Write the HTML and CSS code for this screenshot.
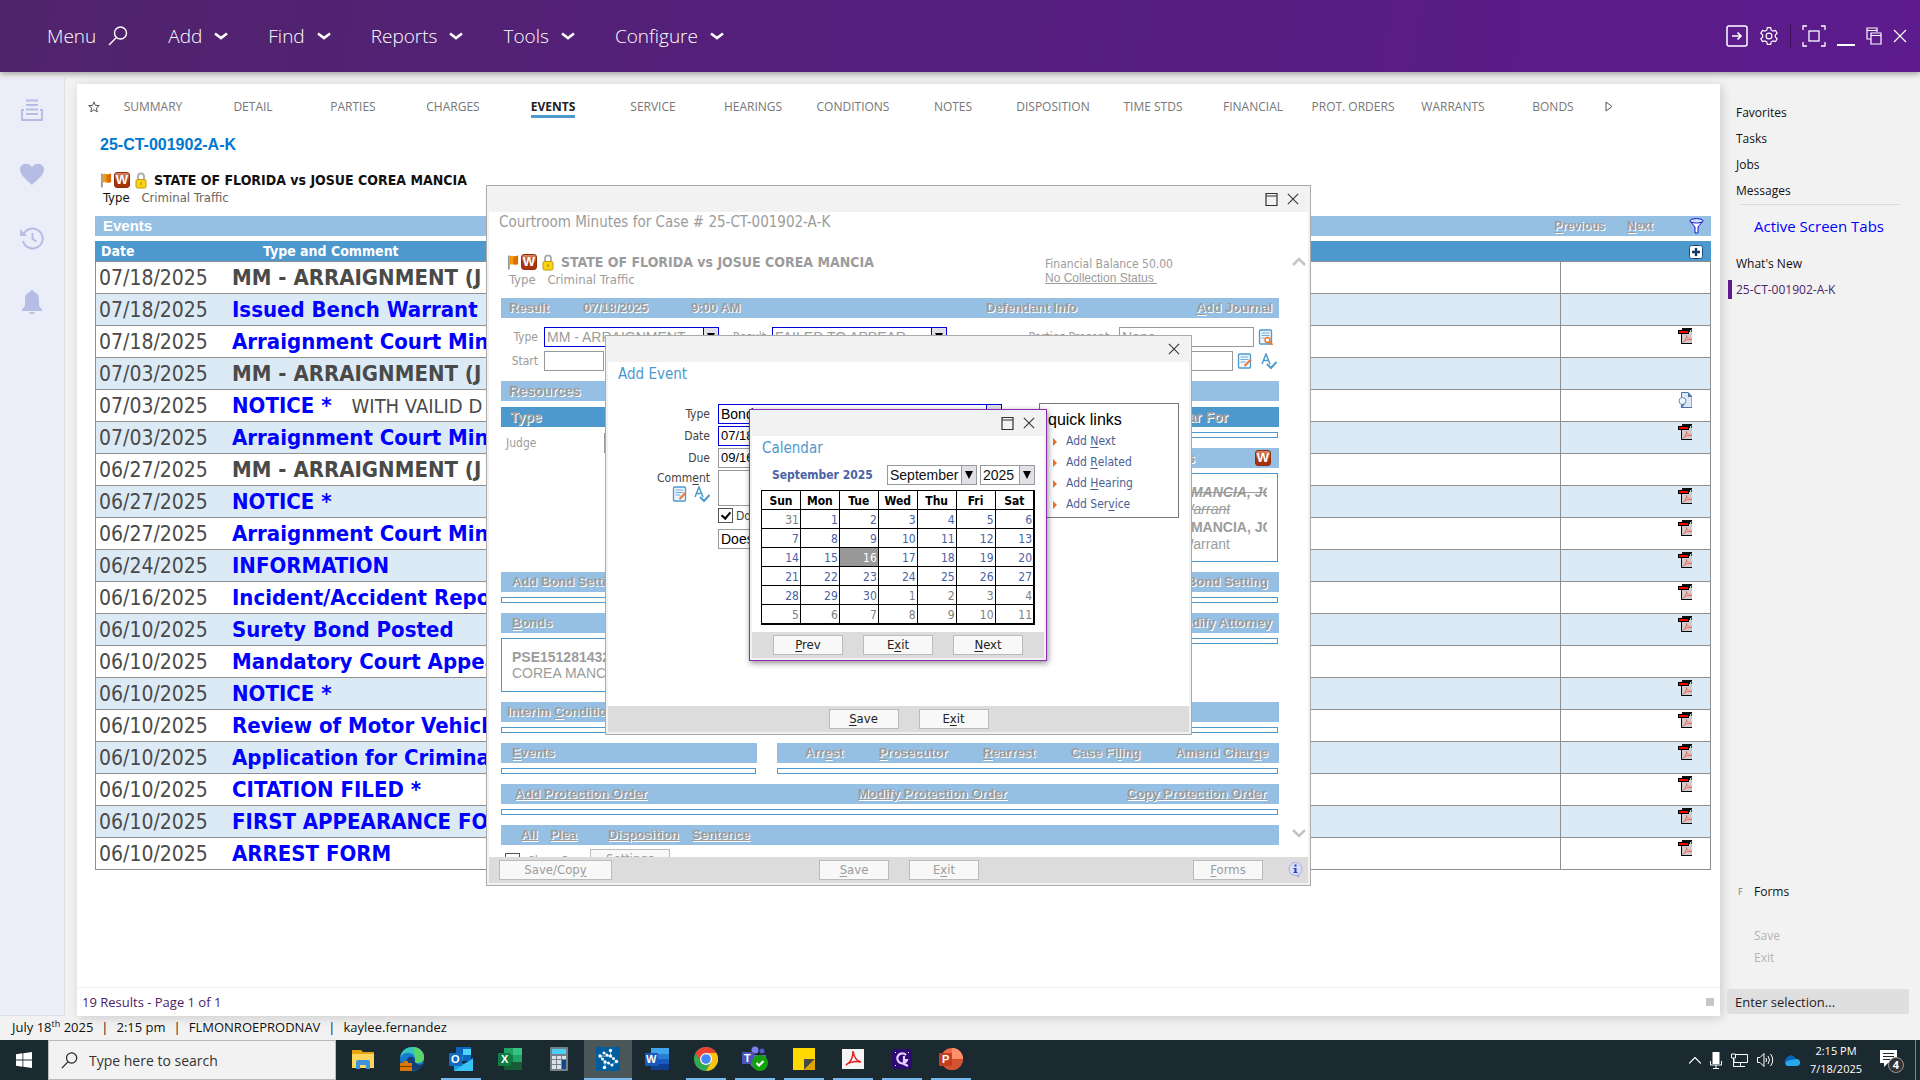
FILE: index.html
```html
<!DOCTYPE html>
<html lang="en">
  <head>
    <meta charset="UTF-8" />
    <meta name="viewport" content="width=device-width, initial-scale=1.0" />
    <title>25-CT-001902-A-K - Events</title>
    <link rel="stylesheet" href="styles.css">
  </head>
  <body>
    <!-- Shared icons -->
    <svg class="defs" width="0" height="0" aria-hidden="true">
      <symbol id="i-chevron" viewBox="0 0 14 8"><path d="M1 1.5l6 4.5 6-4.5" fill="none" stroke="currentColor" stroke-width="2.6" /></symbol>
      <symbol id="i-search" viewBox="0 0 20 20"><circle cx="12.5" cy="7" r="6" fill="none" stroke="currentColor" stroke-width="1.4" /><path d="M8.4 11.4L1 19" stroke="currentColor" stroke-width="1.4" /></symbol>
      <symbol id="i-close" viewBox="0 0 14 14"><path d="M1 1l12 12M13 1L1 13" stroke="currentColor" stroke-width="1.2" /></symbol>
      <symbol id="i-max" viewBox="0 0 13 13"><path d="M1 .5h11v12H1zM1 3h11" fill="none" stroke="currentColor" stroke-width="1.2" /></symbol>
      <symbol id="i-pdf" viewBox="0 0 14 16">
        <path d="M3 1h11v15H3z" fill="#ccc" /><path d="M4 0h10v2H4z" fill="#111" /><path d="M3.5 5v10.5H14" fill="none" stroke="#000" />
        <path d="M0 2h11v4H0z" fill="#000" /><path d="M1 3h9v2H1z" fill="#f00" /><path d="M11.5 0v4M14 1h-2" stroke="#000" fill="none" /><path d="M13 1h1v3h-1z" fill="#f00" />
        <path d="M5 14c2-1 3.500-3.500 3.500-6.500C9 10 11 12 14 12M5 14c2-2 5-3 9-3" fill="none" stroke="#fa6a5c" />
      </symbol>
      <symbol id="i-doc" viewBox="0 0 14 16">
        <path d="M3.500.5H10l4 4v11H3.500z" fill="#dfe6f5" stroke="#4a72ad" /><path d="M10 0l4 5h-4z" fill="#4a72ad" />
        <circle cx="4.500" cy="9" r="3.500" fill="#eef6ff" stroke="#6c8cc0" /><path d="M6 12l-3 3.500" stroke="#4a72ad" stroke-width="1.500" />
      </symbol>
      <symbol id="i-flag" viewBox="0 0 13 17">
        <path d="M1 1h2v15H1z" fill="#999" /><path d="M3 2c2-2 4 1 9-1v9c-4 2-6-1-9 1z" fill="#f39a0b" /><path d="M7 2c2 0 3 0 5-1v9c-2 1-4 .6-5 .3z" fill="#d86f06" />
      </symbol>
      <symbol id="i-lock" viewBox="0 0 12 17">
        <path d="M3 8V4.500a3 3.200 0 0 1 6 0V8" fill="none" stroke="#aaa" stroke-width="1.800" /><rect x="1" y="7.500" width="10" height="8.500" rx="1.500" fill="#f7d515" stroke="#c79a04" /><path d="M6 10v3" stroke="#a37b00" />
      </symbol>
      <symbol id="i-note" viewBox="0 0 15 16">
        <rect x="1" y="1" width="12" height="14" rx="1" fill="#eef6fc" stroke="#4d99ce" stroke-width="1.300" /><path d="M3 4h8M3 6.500h8M3 9h5" stroke="#6cace0" /><path d="M13.500 6.500L7 13" stroke="#ed7635" stroke-width="2" />
      </symbol>
      <symbol id="i-find" viewBox="0 0 15 16">
        <rect x="1" y="1" width="12" height="14" rx="1" fill="#eef6fc" stroke="#4d99ce" stroke-width="1.300" /><path d="M3 4h8M3 6.500h8M3 9h3" stroke="#6cace0" /><circle cx="9" cy="11" r="2.500" fill="#fff" stroke="#ed7635" stroke-width="1.500" /><path d="M11 13l3 3" stroke="#ed7635" stroke-width="2" />
      </symbol>
      <symbol id="i-spell" viewBox="0 0 16 16"><path d="M1 11L5 1l4 10M2.500 7.500h5" fill="none" stroke="#4d99ce" stroke-width="1.500" /><path d="M6 11l4 4 5.500-6" fill="none" stroke="#4d99ce" stroke-width="2" /></symbol>
    </svg>

    <header class="topbar">
      <nav class="menu">
        <button type="button">Menu <svg width="20" height="20"><use href="#i-search" /></svg></button>
        <button type="button">Add <svg width="14" height="8"><use href="#i-chevron" /></svg></button>
        <button type="button">Find <svg width="14" height="8"><use href="#i-chevron" /></svg></button>
        <button type="button">Reports <svg width="14" height="8"><use href="#i-chevron" /></svg></button>
        <button type="button">Tools <svg width="14" height="8"><use href="#i-chevron" /></svg></button>
        <button type="button">Configure <svg width="14" height="8"><use href="#i-chevron" /></svg></button>
      </nav>
      <div class="window-tools">
        <button type="button" aria-label="Sign out"><svg width="22" height="22" viewBox="0 0 22 22" fill="none" stroke="#fff"><rect x="1" y="1" width="20" height="20" rx="2" stroke-width="1.500" /><path d="M6 11h9M11.500 7.500L15 11l-3.500 3.500" stroke-width="1.700" /></svg></button>
        <button type="button" aria-label="Settings"><svg width="20" height="20" viewBox="0 0 24 24" fill="none" stroke="#fff" stroke-width="1.400"><circle cx="12" cy="12" r="3.500" /><path d="M10 2h4l.7 3 2.100 1.200 3-.9 2 3.400-2.200 2.200v2.200l2.200 2.200-2 3.400-3-.9-2.100 1.200-.7 3h-4l-.7-3-2.100-1.200-3 .9-2-3.400 2.200-2.200v-2.200L2.200 8.700l2-3.400 3 .9L9.300 5z" /></svg></button>
        <span class="divider"></span>
        <button type="button" aria-label="Full screen"><svg width="24" height="22" viewBox="0 0 24 22" fill="none" stroke="#fff" stroke-width="1.300"><path d="M5 1H1v4M19 1h4v4M5 21H1v-4M19 21h4v-4" /><rect x="7" y="6" width="10" height="10" /></svg></button>
        <button type="button" aria-label="Minimize"><svg width="18" height="20"><path d="M0 18h18v2H0z" fill="#fff" /></svg></button>
        <button type="button" aria-label="Restore"><svg width="16" height="18" viewBox="0 0 16 18" fill="none" stroke="#fff" stroke-width="1.200"><path d="M5 12H1V1h10v4M1 3.500h10" /><path d="M5 6h10v11H5zM5 8.500h10" /></svg></button>
        <button type="button" aria-label="Close"><svg width="14" height="14"><use href="#i-close" /></svg></button>
      </div>
    </header>

    <div class="workspace">
      <aside class="rail">
        <a href="#" aria-label="Print queue"><svg width="24" height="24" viewBox="0 0 24 24" fill="none" stroke="#b5bde4" stroke-width="2"><path d="M6 2.500h12M6 7h12M6 11.500h12M6 16h12" /><path d="M4 12H2v10h20V12h-2" /></svg></a>
        <a href="#" aria-label="Favorites"><svg width="24" height="24" viewBox="0 0 24 24"><path d="M12 23C7 18 0 13 0 7.500 0 1 8.500-.5 12 5c3.500-5.500 12-4 12 2.500C24 13 17 18 12 23z" fill="#b5bde4" /></svg></a>
        <a href="#" aria-label="History"><svg width="24" height="24" viewBox="0 0 24 24" fill="none" stroke="#b5bde4" stroke-width="2"><path d="M3.500 8.500A10 10 0 1 1 3 15" /><path d="M12.500 7v6l4 2.500" /><path d="M0 3v7h7z" fill="#b5bde4" stroke="none" /></svg></a>
        <a href="#" aria-label="Alerts"><svg width="24" height="24" viewBox="0 0 24 24"><path d="M12 0a2 2 0 0 1 2 2c3.500 1 5 4 5 7.500V16l3 3.500V21H2v-1.500L5 16V9.500C5 6 6.500 3 10 2a2 2 0 0 1 2-2zM9.500 22h5a2.500 2.500 0 0 1-5 0z" fill="#b5bde4" /></svg></a>
      </aside>

      <main class="panel">
        <nav class="tabs">
          <svg class="star" width="12" height="12" viewBox="0 0 12 12"><path d="M6 .8l1.400 3.600 3.900.2-3 2.500 1 3.800L6 8.800l-3.300 2.100 1-3.800-3-2.500 3.900-.2z" fill="none" stroke="#555" /></svg>
          <a href="#">SUMMARY</a>
          <a href="#">DETAIL</a>
          <a href="#">PARTIES</a>
          <a href="#">CHARGES</a>
          <a href="#" class="active"><span>EVENTS</span></a>
          <a href="#">SERVICE</a>
          <a href="#">HEARINGS</a>
          <a href="#">CONDITIONS</a>
          <a href="#">NOTES</a>
          <a href="#">DISPOSITION</a>
          <a href="#">TIME STDS</a>
          <a href="#">FINANCIAL</a>
          <a href="#">PROT. ORDERS</a>
          <a href="#">WARRANTS</a>
          <a href="#">BONDS</a>
          <svg class="more" width="8" height="11" viewBox="0 0 8 11"><path d="M1 1l6 4.500L1 10z" fill="none" stroke="#555" /></svg>
        </nav>

        <div class="case">
          <h1>25-CT-001902-A-K</h1>
          <div class="case-title">
            <svg width="12" height="17"><use href="#i-flag" /></svg><span class="w-badge">W</span><svg width="12" height="17"><use href="#i-lock" /></svg>
            <strong>STATE OF FLORIDA vs JOSUE COREA MANCIA</strong>
          </div>
          <p class="case-type"><span>Type</span> Criminal Traffic</p>
        </div>

        <div class="events">
          <div class="events-bar">
            <h2>Events</h2>
            <a href="#"><u>P</u>revious</a>
            <a href="#"><u>N</u>ext</a>
            <svg width="15" height="16" viewBox="0 0 15 16"><path d="M1 3l5 6v6h3V9l5-6" fill="#fff" stroke="#1414dc" /><ellipse cx="7.500" cy="2.800" rx="6.500" ry="2.200" fill="#cfe3f4" stroke="#1414dc" /></svg>
          </div>
          <table class="events-table">
            <thead>
              <tr>
                <th class="col-date">Date</th>
                <th class="col-type">Type and Comment</th>
                <th class="col-doc"><svg width="14" height="14" viewBox="0 0 14 14"><rect x=".5" y=".5" width="13" height="13" rx="2" fill="#fff" stroke="#1c4f7c" /><path d="M7 3v8M3 7h8" stroke="#123c66" stroke-width="2.400" /></svg></th>
              </tr>
            </thead>
            <tbody>
              <tr><td>07/18/2025</td><td><b>MM - ARRAIGNMENT (J</b></td><td></td></tr>
              <tr><td>07/18/2025</td><td><a href="#">Issued Bench Warrant</a></td><td></td></tr>
              <tr><td>07/18/2025</td><td><a href="#">Arraignment Court Min</a></td><td><svg><use href="#i-pdf" /></svg></td></tr>
              <tr><td>07/03/2025</td><td><b>MM - ARRAIGNMENT (J</b></td><td></td></tr>
              <tr><td>07/03/2025</td><td><a href="#">NOTICE *</a> <span>WITH VAILID D</span></td><td><svg><use href="#i-doc" /></svg></td></tr>
              <tr><td>07/03/2025</td><td><a href="#">Arraignment Court Min</a></td><td><svg><use href="#i-pdf" /></svg></td></tr>
              <tr><td>06/27/2025</td><td><b>MM - ARRAIGNMENT (J</b></td><td></td></tr>
              <tr><td>06/27/2025</td><td><a href="#">NOTICE *</a></td><td><svg><use href="#i-pdf" /></svg></td></tr>
              <tr><td>06/27/2025</td><td><a href="#">Arraignment Court Min</a></td><td><svg><use href="#i-pdf" /></svg></td></tr>
              <tr><td>06/24/2025</td><td><a href="#">INFORMATION</a></td><td><svg><use href="#i-pdf" /></svg></td></tr>
              <tr><td>06/16/2025</td><td><a href="#">Incident/Accident Repo</a></td><td><svg><use href="#i-pdf" /></svg></td></tr>
              <tr><td>06/10/2025</td><td><a href="#">Surety Bond Posted</a></td><td><svg><use href="#i-pdf" /></svg></td></tr>
              <tr><td>06/10/2025</td><td><a href="#">Mandatory Court Appea</a></td><td></td></tr>
              <tr><td>06/10/2025</td><td><a href="#">NOTICE *</a></td><td><svg><use href="#i-pdf" /></svg></td></tr>
              <tr><td>06/10/2025</td><td><a href="#">Review of Motor Vehicl</a></td><td><svg><use href="#i-pdf" /></svg></td></tr>
              <tr><td>06/10/2025</td><td><a href="#">Application for Crimina</a></td><td><svg><use href="#i-pdf" /></svg></td></tr>
              <tr><td>06/10/2025</td><td><a href="#">CITATION FILED *</a></td><td><svg><use href="#i-pdf" /></svg></td></tr>
              <tr><td>06/10/2025</td><td><a href="#">FIRST APPEARANCE FO</a></td><td><svg><use href="#i-pdf" /></svg></td></tr>
              <tr><td>06/10/2025</td><td><a href="#">ARREST FORM</a></td><td><svg><use href="#i-pdf" /></svg></td></tr>
            </tbody>
          </table>
        </div>

        <footer class="panel-footer">19 Results - Page 1 of 1 <i></i></footer>
      </main>

      <aside class="sidebar">
        <nav class="side-links">
          <a href="#">Favorites</a>
          <a href="#">Tasks</a>
          <a href="#">Jobs</a>
          <a href="#">Messages</a>
        </nav>
        <a href="#" class="screen-tabs">Active Screen Tabs</a>
        <nav class="side-links">
          <a href="#">What's New</a>
          <a href="#" class="current">25-CT-001902-A-K</a>
        </nav>
        <div class="side-actions">
          <a href="#" class="forms"><small>F</small>Forms</a>
          <a href="#" class="off">Save</a>
          <a href="#" class="off">Exit</a>
        </div>
        <input type="text" class="selection" placeholder="Enter selection..." aria-label="Enter selection" />
      </aside>
    </div>

    <div class="status">
      <span>July 18<sup>th</sup> 2025</span><span>|</span><span>2:15 pm</span><span>|</span><span>FLMONROEPRODNAV</span><span>|</span><span>kaylee.fernandez</span>
    </div>

    <!-- Courtroom minutes window -->
    <section class="window minutes">
      <div class="titlebar"><svg width="13" height="13"><use href="#i-max" /></svg><svg width="12" height="12"><use href="#i-close" /></svg></div>
      <div class="window-body">
        <div class="minutes-content">
          <h2>Courtroom Minutes for Case # 25-CT-001902-A-K</h2>
          <div class="minutes-head">
            <div>
              <div class="case-title">
                <svg width="12" height="17"><use href="#i-flag" /></svg><span class="w-badge">W</span><svg width="12" height="17"><use href="#i-lock" /></svg>
                <strong>STATE OF FLORIDA vs JOSUE COREA MANCIA</strong>
              </div>
              <p class="case-type"><span>Type</span> Criminal Traffic</p>
            </div>
            <p class="balance">Financial Balance 50.00<br /><a href="#">No Collection Status&nbsp;</a></p>
          </div>
          <div class="bar bar-result"><span>Result</span><span>07/18/2025</span><span>9:00 AM</span><span>Defendant Info</span><a href="#"><u>A</u>dd Journal</a></div>
          <div class="minutes-form">
            <label for="m-type">Type</label>
            <span class="select required"><select id="m-type"><option>MM - ARRAIGNMENT</option></select></span>
            <label for="m-result">Result</label>
            <span class="select required"><select id="m-result"><option>FAILED TO APPEAR</option></select></span>
            <label for="m-party" class="push">Parties Present</label>
            <input type="text" id="m-party" class="w-party" value="None" />
            <svg width="16" height="16"><use href="#i-find" /></svg>
          </div>
          <div class="minutes-form">
            <label for="m-start">Start</label>
            <input type="text" id="m-start" class="w-start" />
            <input type="text" class="w-comment" aria-label="Comment" />
            <svg width="16" height="16"><use href="#i-note" /></svg>
            <svg width="16" height="16"><use href="#i-spell" /></svg>
          </div>
          <div class="bar bar-plain">Resources</div>
          <div class="split resources">
            <div>
              <div class="bar dark">Type</div>
              <div class="judge"><label for="m-judge">Judge</label><input type="text" id="m-judge" /></div>
            </div>
            <div>
              <div class="bar dark bar-for">Appear For</div>
              <div class="line-box"></div>
              <div class="bar bar-end">Warrants <span class="w-badge">W</span></div>
              <div class="warrants">
                <p class="old"><b>COREA MANCIA, JOSUE</b><span>Bench Warrant</span></p>
                <p><b>COREA MANCIA, JOSUE</b><span>Bench Warrant</span></p>
              </div>
            </div>
          </div>
          <div class="bar bar-bond"><a href="#">Add Bond Setting</a><a href="#">Modify Bond Setting</a></div>
          <div class="line-box"></div>
          <div class="split bonds">
            <div>
              <div class="bar"><a href="#"><u>B</u>onds</a></div>
              <div class="bond-box"><b>PSE1512814321</b><span>COREA MANCIA</span></div>
            </div>
            <div>
              <div class="bar bar-attorney"><a href="#">Modify Attorney</a></div>
              <div class="line-box"></div>
            </div>
          </div>
          <div class="bar bar-interim"><a href="#">Interim <u>C</u>onditions</a></div>
          <div class="line-box"></div>
          <div class="split">
            <div>
              <div class="bar"><a href="#"><u>E</u>vents</a></div>
              <div class="line-box"></div>
            </div>
            <div>
              <div class="bar bar-charge"><a href="#">Arr<u>e</u>st</a><a href="#"><u>P</u>rosecutor</a><a href="#"><u>R</u>earrest</a><a href="#">Case Fi<u>l</u>ing</a><a href="#">Amend Char<u>g</u>e</a></div>
              <div class="line-box"></div>
            </div>
          </div>
          <div class="bar bar-order"><a href="#">Add Protection Order</a><a href="#">Modify Protection Order</a><a href="#">Copy Protection Order</a></div>
          <div class="line-box"></div>
          <div class="bar bar-all"><a href="#">All</a><a href="#">Plea</a><a href="#">Disposition</a><a href="#">Sentence</a></div>
          <div class="cutoff">
            <input type="checkbox" id="show-co" /><label for="show-co">Show Co</label>
            <button type="button" class="btn">Settings</button>
          </div>
        </div>
        <div class="scroller"><svg width="14" height="10"><path d="M1 9l6-6 6 6" /></svg><svg width="14" height="10"><path d="M1 1l6 6 6-6" /></svg></div>
      </div>
      <div class="window-footer">
        <button type="button" class="btn wide">Save/Cop<u>y</u></button>
        <div class="btn-pair">
          <button type="button" class="btn"><u>S</u>ave</button>
          <button type="button" class="btn">E<u>x</u>it</button>
        </div>
        <button type="button" class="btn"><u>F</u>orms</button>
        <svg width="15" height="16" viewBox="0 0 15 16"><path d="M5 11l6 5v-5z" fill="#a9a6cc" /><circle cx="7.500" cy="7" r="6.500" fill="#dcdcf6" stroke="#b0aedb" /><path d="M6.500 2.500h2v2h-2zM5.500 6h3v4h1v1h-4v-1h1V7h-1z" fill="#1746c9" /></svg>
      </div>
    </section>

    <!-- Add event window -->
    <section class="window add-event">
      <div class="titlebar"><svg width="12" height="12"><use href="#i-close" /></svg></div>
      <div class="window-body">
        <h2>Add Event</h2>
        <div class="event-area">
          <form class="event-form">
            <label for="e-type">Type</label>
            <span class="select required wide-select"><select id="e-type"><option>Bond</option></select></span>
            <label for="e-date">Date</label>
            <input type="text" id="e-date" class="date required" value="07/18" />
            <label for="e-due">Due</label>
            <input type="text" id="e-due" class="date" value="09/16" />
            <div class="comment-label">
              <label for="e-comment">Comm<u>e</u>nt</label>
              <span><svg width="16" height="16"><use href="#i-note" /></svg><svg width="16" height="16"><use href="#i-spell" /></svg></span>
            </div>
            <textarea id="e-comment"></textarea>
            <div class="docket"><input type="checkbox" id="e-docket" checked /><label for="e-docket">Do</label></div>
            <input type="text" class="does" value="Does" aria-label="Docket text" />
          </form>
          <div class="quick-links">
            <h3>quick links</h3>
            <a href="#">Add <u>N</u>ext</a>
            <a href="#">Add <u>R</u>elated</a>
            <a href="#">Add <u>H</u>earing</a>
            <a href="#">Add Ser<u>v</u>ice</a>
          </div>
        </div>
      </div>
      <div class="window-footer centered">
        <button type="button" class="btn"><u>S</u>ave</button>
        <button type="button" class="btn">E<u>x</u>it</button>
      </div>
    </section>

    <!-- Calendar window -->
    <section class="window calendar">
      <div class="titlebar"><svg width="13" height="13"><use href="#i-max" /></svg><svg width="12" height="12"><use href="#i-close" /></svg></div>
      <div class="window-body">
        <h2>Calendar</h2>
        <div class="month-row">
          <strong>September 2025</strong>
          <span class="select month"><select aria-label="Month"><option>September</option></select></span>
          <span class="select year"><select aria-label="Year"><option>2025</option></select></span>
        </div>
        <table class="days">
          <thead>
            <tr><th>Sun</th><th>Mon</th><th>Tue</th><th>Wed</th><th>Thu</th><th>Fri</th><th>Sat</th></tr>
          </thead>
          <tbody>
            <tr><td class="out">31</td><td>1</td><td>2</td><td>3</td><td>4</td><td>5</td><td>6</td></tr>
            <tr><td>7</td><td>8</td><td>9</td><td>10</td><td>11</td><td>12</td><td>13</td></tr>
            <tr><td>14</td><td>15</td><td class="today">16</td><td>17</td><td>18</td><td>19</td><td>20</td></tr>
            <tr><td>21</td><td>22</td><td>23</td><td>24</td><td>25</td><td>26</td><td>27</td></tr>
            <tr><td>28</td><td>29</td><td>30</td><td class="out">1</td><td class="out">2</td><td class="out">3</td><td class="out">4</td></tr>
            <tr><td class="out">5</td><td class="out">6</td><td class="out">7</td><td class="out">8</td><td class="out">9</td><td class="out">10</td><td class="out">11</td></tr>
          </tbody>
        </table>
      </div>
      <div class="window-footer centered">
        <button type="button" class="btn"><u>P</u>rev</button>
        <button type="button" class="btn">E<u>x</u>it</button>
        <button type="button" class="btn"><u>N</u>ext</button>
      </div>
    </section>

    <!-- Desktop taskbar -->
    <footer class="taskbar">
      <button type="button" class="start" aria-label="Start"><svg width="16" height="16" viewBox="0 0 16 16" fill="#fff"><path d="M0 2.200l6.500-.9v6.300H0zM7.300 1.200L16 0v7.600H7.300zM0 8.400h6.500v6.300L0 13.800zM7.300 8.400H16V16l-8.700-1.200z" /></svg></button>
      <label class="search"><svg width="17" height="17"><use href="#i-search" /></svg><input type="text" placeholder="Type here to search" /></label>
      <div class="apps">
        <a href="#" aria-label="File Explorer"><svg width="24" height="24" viewBox="0 0 24 24"><path d="M1 3h9l2 2h11v16H1z" fill="#e5a50e" /><path d="M1 7h22v14H1z" fill="#ffd65c" /><path d="M5 22v-7q0-2 2-2h10q2 0 2 2v7h-4v-4H9v4z" fill="#3b93dd" /></svg></a>
        <a href="#" aria-label="Edge"><svg width="24" height="24" viewBox="0 0 24 24"><circle cx="12" cy="12" r="12" fill="#1679cb" /><path d="M0 11C1 4 6 0 12 0c8 0 12 5 12 10 0 4-3 6-6 6-3 0-4-2-3-4 0-4-3-6-7-6-4 0-7 2-8 5z" fill="#36c5c0" /><path d="M14 0c7 1 10 6 10 10 0 4-3 6-6 6-3 0-4-2-3-4z" fill="#5bd46a" /><path d="M15 12c-1 3 1 7 8 5-3 6-10 8-15 5-4-3-3-9 1-12 3-1 6 1 6 2z" fill="#153e73" /><path d="M4 16V14h4v2h4v8H0v-8z" fill="#d97806" /><path d="M0 19h12v1H0z" fill="#7b3c00" /></svg></a>
        <a href="#" class="open" aria-label="Outlook"><svg width="24" height="24" viewBox="0 0 24 24"><path d="M7 0h15v14H7z" fill="#0a66bd" /><path d="M14 2h8v6h-8z" fill="#50d2fb" /><path d="M7 8h7v6H7z" fill="#1490df" /><path d="M5 11l9.500 6L24 11v13H5z" fill="#1aa2e8" /><path d="M5 24l19-12v12z" fill="#3cc3f5" /><rect y="6" width="13" height="13" rx="1" fill="#0f6cbf" /><text x="2" y="16" font-size="11">O</text></svg></a>
        <a href="#" aria-label="Excel"><svg width="24" height="24" viewBox="0 0 24 24"><path d="M6 1h18v22H6z" fill="#21a366" /><path d="M15 1h9v7h-9z" fill="#33c481" /><path d="M6 8h9v7H6z" fill="#107c41" /><path d="M6 15h18v8H6z" fill="#185c37" /><rect y="6" width="13" height="13" rx="1" fill="#107c41" /><text x="3" y="16" font-size="11">X</text></svg></a>
        <a href="#" aria-label="Calculator"><svg width="18" height="24" viewBox="0 0 18 24"><rect width="18" height="24" rx="1" fill="#75808a" /><path d="M2 2h14v5H2z" fill="#49cff5" /><path d="M2 9h4v3H2zM7 9h4v3H7zM12 9h4v3h-4zM2 13h4v4H2zM7 13h4v4H7zM2 18h4v4H2zM7 18h4v4H7z" fill="#dde2e6" /><path d="M12 13h4v9h-4z" fill="#124a89" /></svg></a>
        <a href="#" class="open current" aria-label="Benchmark"><svg width="24" height="24" viewBox="0 0 24 24"><path d="M0 0h24v24H0z" fill="#005e9e" /><path d="M14.500 3.500v6l-7-3.500M14.500 9.500L4 9l5 5.500v6M9 14.500l7 3.500 4.500-3.500-6-5" fill="none" stroke="#7fb4da" stroke-width="1" /><g fill="#fff"><circle cx="14.500" cy="3.500" r="1.700" /><circle cx="14.500" cy="9" r="1.700" /><circle cx="11" cy="8" r="1.500" /><circle cx="8" cy="6" r="1.500" /><circle cx="4" cy="9" r="1.700" /><circle cx="6.500" cy="12" r="1.500" /><circle cx="9" cy="15" r="1.700" /><circle cx="8.500" cy="20.500" r="1.700" /><circle cx="12.500" cy="16" r="1.500" /><circle cx="16" cy="18" r="1.500" /><circle cx="17.500" cy="11.500" r="1.500" /><circle cx="20.500" cy="14.500" r="1.700" /></g></svg></a>
        <a href="#" aria-label="Word"><svg width="24" height="24" viewBox="0 0 24 24"><path d="M6 1h18v6H6z" fill="#41a5ee" /><path d="M6 7h18v5H6z" fill="#2b7cd3" /><path d="M6 12h18v5H6z" fill="#185abd" /><path d="M6 17h18v6H6z" fill="#103f91" /><rect y="6" width="13" height="13" rx="1" fill="#185abd" /><text x="1" y="16" font-size="11">W</text></svg></a>
        <a href="#" class="open" aria-label="Chrome"><svg width="24" height="24" viewBox="0 0 24 24"><circle cx="12" cy="12" r="12" fill="#34a853" /><path d="M1.600 6A12 12 0 0 1 22.400 6H12l-5.200 9z" fill="#ea4335" /><path d="M22.400 6A12 12 0 0 1 12 24l5.200-9L12 6z" fill="#fbc116" /><circle cx="12" cy="12" r="6" fill="#fff" /><circle cx="12" cy="12" r="4.800" fill="#4285f4" /></svg></a>
        <a href="#" class="open" aria-label="Teams"><svg width="26" height="26" viewBox="0 0 26 26"><circle cx="13" cy="4" r="3.500" fill="#7b83eb" /><circle cx="20" cy="5" r="2.500" fill="#5059c9" /><path d="M8 9h16v9q-3 6-9 5-6-1-7-6z" fill="#6068d2" /><rect y="6" width="12" height="12" rx="1" fill="#4b53bc" /><text x="2" y="16" font-size="11">T</text><circle cx="18" cy="17" r="8" fill="#13a10e" /><path d="M14.500 17l2.500 2.500 4.500-4.500" fill="none" stroke="#fff" stroke-width="2" /></svg></a>
        <a href="#" class="open" aria-label="Sticky Notes"><svg width="22" height="22" viewBox="0 0 22 22"><path d="M0 0h22v22H0z" fill="#ffd900" /><path d="M11 22V11h11z" fill="#484848" /><path d="M11 22l11-11v11z" fill="#e0a500" /></svg></a>
        <a href="#" class="open" aria-label="Acrobat"><svg width="22" height="20" viewBox="0 0 22 20"><path d="M0 0h22v20H0z" fill="#f4f4f4" /><path d="M4 16c4-2 7-7 7-14 1 7 4 10 8 11-5-1-11 0-15 3z" fill="none" stroke="#e21d1d" stroke-width="1.500" /></svg></a>
        <a href="#" class="open" aria-label="Capture"><svg width="20" height="20" viewBox="0 0 20 20"><rect width="20" height="20" rx="3" fill="#2c0b70" /><path d="M14 6a5 5 0 1 0 1 5h-4m1-4v8l4 2" fill="none" stroke="#e8c9ff" stroke-width="2.200" /><path d="M3 3h1v1H3zM16 3h1v1h-1zM3 16h1v1H3z" fill="#fff" /></svg></a>
        <a href="#" class="open" aria-label="PowerPoint"><svg width="24" height="24" viewBox="0 0 24 24"><circle cx="13" cy="12" r="11" fill="#ed6c47" /><path d="M13 1a11 11 0 0 1 11 11H13z" fill="#ff8f6b" /><path d="M2 12h22a11 11 0 0 1-22 0z" fill="#d35230" /><rect y="6" width="13" height="13" rx="1" fill="#c43e1c" /><text x="3" y="16" font-size="11">P</text></svg></a>
      </div>
      <div class="tray">
        <svg width="12" height="7" viewBox="0 0 12 7"><path d="M0 6.500l6-6 6 6" fill="none" stroke="#fff" stroke-width="1.200" /></svg>
        <svg width="12" height="17" viewBox="0 0 12 17"><rect x="2.500" width="7" height="12" fill="#fff" /><path d="M.5 9v4h11V9M6 13v3M3 16.500h6" fill="none" stroke="#fff" /></svg>
        <svg width="17" height="14" viewBox="0 0 17 14" fill="none" stroke="#fff"><path d="M5 1.500h11.500v8H3V6M9.500 9.500v3.500M5 13.500h9" /><path d="M.5 1h4v4h-4zM2.500 5v8.500H6" /></svg>
        <svg width="17" height="14" viewBox="0 0 17 14" fill="none" stroke="#fff"><path d="M.5 4.500H3l4-4v13l-4-4H.5zM9 5q1 2 0 4M11 3q3 4 0 8M13.500 1q4.500 6 0 12" /></svg>
        <svg width="17" height="11" viewBox="0 0 17 11"><path d="M3 10a4 4 0 0 1 0-6C5-1 11-1 13 4l-6 6z" fill="#0364b8" /><path d="M4 11a3 3 0 0 1 0-5l4-1 5-1a3.500 3.500 0 0 1 1 7z" fill="#28a8ea" /></svg>
        <div class="clock"><span>2:15 PM</span><span>7/18/2025</span></div>
        <div class="notice"><svg width="17" height="17" viewBox="0 0 17 17"><path d="M0 0h17v13H8l-4 4v-4H0z" fill="#fff" /><path d="M3 3.500h11M3 6.500h11M3 9.500h7" stroke="#1b2a30" /></svg><span>4</span></div>
        <span class="show-desktop"></span>
      </div>
    </footer>
  </body>
</html>
```

FILE: styles.css
```css
* {
  box-sizing: border-box;
}

:root {
  --ui: "Open Sans", "Noto Sans", sans-serif;
  --form: "DejaVu Sans Condensed", "Noto Sans", sans-serif;
  --arial: "Liberation Sans", Arial, sans-serif;
  --light-blue: #95c0e3;
  --blue: #4d99ce;
  --off: #9c9c9c;
}

body {
  margin: 0;
  min-height: 100vh;
  display: flex;
  flex-direction: column;
  position: relative;
  background: #f2f2f2;
  font-family: var(--ui);
  font-size: 13px;
  color: #111;
}

h1,
h2,
h3,
p {
  margin: 0;
}

a {
  color: inherit;
  text-decoration: none;
}

button,
input,
select,
textarea {
  font: inherit;
  color: inherit;
}

u {
  text-underline-offset: 2px;
}

svg {
  flex: none;
}

.defs {
  position: absolute;
}

/* Top bar */
.topbar {
  height: 72px;
  display: flex;
  justify-content: space-between;
  align-items: center;
  padding: 0 13px 0 47px;
  background: linear-gradient(100deg, #50246b 0%, #551f7d 45%, #5d1b8d 100%);
  box-shadow: 0 2px 6px rgba(0, 0, 0, 0.35);
  color: #fff;
  z-index: 1;
}

.menu {
  display: flex;
  gap: 40px;
}

.menu button,
.window-tools button {
  display: flex;
  align-items: center;
  padding: 0;
  border: 0;
  background: none;
  color: #fff;
  cursor: pointer;
}

.menu button {
  gap: 12px;
  font-size: 19px;
  font-weight: 300;
}

.window-tools {
  display: flex;
  align-items: center;
  gap: 11px;
}

.divider {
  width: 1px;
  height: 24px;
  background: #3c1260;
}

/* Workspace */
.workspace {
  flex: 1;
  display: flex;
  padding-top: 6px;
}

.rail {
  width: 65px;
  padding-top: 20px;
  display: flex;
  flex-direction: column;
  align-items: center;
  gap: 40px;
  background: #ebeef8;
  border-right: 1px solid #dcdfe6;
  border-bottom: 1px solid #dcdfe6;
}

.rail a {
  height: 24px;
}

.panel {
  flex: 1;
  min-width: 0;
  margin: 6px 0 0 12px;
  display: flex;
  flex-direction: column;
  background: #fff;
  box-shadow: 2px 2px 10px rgba(0, 0, 0, 0.16);
}

.tabs {
  display: flex;
  height: 51px;
  padding: 14px 11px 0;
  font-size: 12px;
  line-height: 18px;
  color: #777;
}

.tabs .star,
.tabs .more {
  margin: 3px 3px 0 0;
}

.tabs .more {
  margin-left: 2px;
}

.tabs a {
  flex: 0 1 100px;
  text-align: center;
}

.tabs .active {
  color: #222;
  font-weight: bold;
}

.tabs .active span {
  display: inline-block;
  line-height: 16px;
  border-bottom: 3px solid var(--blue);
}

.case {
  padding: 0 23px 10px;
}

.case h1 {
  font: bold 16px/20px var(--arial);
  color: #0078d0;
}

.case-title {
  display: flex;
  align-items: center;
  gap: 2px;
  height: 20px;
  font-family: var(--form);
  font-size: 14px;
}

.case-title strong {
  margin-left: 5px;
  white-space: nowrap;
}

.case .case-title {
  margin-top: 15px;
}

.case-title svg:nth-of-type(2) {
  margin-left: 3px;
}

.w-badge {
  width: 16px;
  height: 16px;
  border: 1px solid #8e2c0c;
  border-radius: 3px;
  background: linear-gradient(#d9886a, #a93308 60%);
  color: #fff;
  font: bold 13px/14px var(--arial);
  text-align: center;
  text-shadow: none;
}

.case-type {
  height: 16px;
  padding-left: 3px;
  font-family: var(--form);
  font-size: 13px;
  line-height: 16px;
  color: #666;
}

.case-type span {
  margin-right: 8px;
  color: #111;
}

/* Events list */
.events {
  margin: 0 9px 0 18px;
}

.events-bar {
  display: flex;
  align-items: center;
  height: 20px;
  margin-bottom: 5px;
  padding: 0 7px 0 8px;
  background: var(--light-blue);
  font-family: var(--arial);
}

.events-bar h2 {
  flex: 1;
  font-size: 15px;
  line-height: 20px;
  color: #fff;
}

.events-bar a {
  margin-right: 22px;
  font-size: 12px;
  font-weight: bold;
  line-height: 24px;
  color: var(--off);
  text-shadow: 1px 1px #fff;
}

.events-bar a + a {
  margin-right: 36px;
}

.events-table {
  width: 100%;
  border-spacing: 0;
  table-layout: fixed;
  font-family: var(--form);
  font-size: 21px;
  color: #4a4a4a;
}

.events-table th {
  height: 21px;
  padding: 0 0 0 6px;
  background: var(--blue);
  border-bottom: 1px solid #8f8f8f;
  color: #fff;
  font-size: 14px;
  line-height: 20px;
  text-align: left;
}

.events-table .col-date {
  width: 134px;
}

.events-table .col-type {
  padding-left: 34px;
}

.events-table .col-doc {
  width: 151px;
  padding-right: 8px;
  text-align: right;
}

.col-doc svg {
  display: inline-block;
  vertical-align: middle;
}

.events-table td {
  height: 32px;
  padding: 1px 3px 0;
  border-bottom: 1px solid #8f8f8f;
  line-height: 24px;
  white-space: nowrap;
  overflow: hidden;
}

.events-table td:first-child {
  border-left: 1px solid #8f8f8f;
}

.events-table td:last-child {
  border-left: 1px solid #8f8f8f;
  border-right: 1px solid #8f8f8f;
  padding: 2px 18px 0 0;
  text-align: right;
  vertical-align: top;
  line-height: 0;
}

.events-table tbody tr:nth-child(even) {
  background: #dceaf6;
}

.events-table tbody a,
.events-table tbody b {
  font-size: 22px;
  font-weight: bold;
}

.events-table tbody a {
  color: #00f;
}

.events-table tbody span {
  margin-left: 14px;
  font-size: 20px;
}

.events-table td svg {
  width: 14px;
  height: 16px;
}

.panel-footer {
  display: flex;
  align-items: center;
  justify-content: space-between;
  height: 29px;
  margin-top: auto;
  padding: 0 6px 0 5px;
  border-top: 1px solid #eee;
  color: #4b2367;
}

.panel-footer i {
  width: 8px;
  height: 8px;
  background: #c8c8c8;
}

/* Right sidebar */
.sidebar {
  width: 200px;
  padding: 22px 11px 2px 7px;
  display: flex;
  flex-direction: column;
}

.side-links {
  display: flex;
  flex-direction: column;
  font-size: 12px;
  line-height: 26px;
}

.side-links a {
  padding-left: 9px;
}

.side-links .current {
  margin: 3px 0 0 1px;
  padding-left: 4px;
  line-height: 19px;
  border-left: 4px solid #5d1b8d;
  color: #4b2367;
}

.screen-tabs {
  margin: 0 9px 13px 13px;
  padding: 9px 0 0 14px;
  border-top: 1px solid #dcdcdc;
  font-size: 15px;
  line-height: 24px;
  color: #00f;
}

.side-actions {
  margin-top: auto;
  padding: 0 0 20px 27px;
  display: flex;
  flex-direction: column;
  font-size: 12px;
  line-height: 22px;
}

.side-actions .forms {
  margin-bottom: 22px;
  position: relative;
}

.side-actions small {
  position: absolute;
  left: -16px;
  font-size: 9px;
  color: #777;
}

.side-actions .off {
  color: #b4b4b4;
}

.selection {
  width: 100%;
  height: 25px;
  padding: 0 8px;
  border: 0;
  border-radius: 3px;
  background: #dfdfdf;
}

.selection::placeholder {
  color: #222;
}

.status {
  display: flex;
  gap: 8px;
  height: 24px;
  padding-left: 12px;
  font-size: 13px;
  line-height: 22px;
}

.status sup {
  font-size: 9px;
  line-height: 0;
}

/* Windows */
.window {
  position: absolute;
  display: flex;
  flex-direction: column;
  padding: 0 2px 2px;
  border: 1px solid #aaa;
  background: #f2f2f2;
  font-family: var(--form);
  font-size: 12px;
  z-index: 2;
}

.titlebar {
  display: flex;
  align-items: center;
  justify-content: flex-end;
  gap: 9px;
  height: 26px;
  padding-right: 9px;
  color: #333;
}

.window-body {
  flex: 1;
  min-height: 0;
  background: #fff;
}

.window-body h2 {
  font-size: 15px;
  font-weight: normal;
  line-height: 24px;
  color: var(--blue);
}

.window-footer {
  display: flex;
  align-items: center;
  height: 26px;
  background: #dcdcdc;
}

.window-footer.centered {
  justify-content: center;
  gap: 20px;
}

.btn {
  width: 70px;
  height: 20px;
  padding: 0;
  border: 1px solid #bbb;
  background: #f8f8f8;
  font-size: 13px;
  line-height: 18px;
  color: #222;
}

.window input[type="text"],
.window textarea,
.select {
  height: 20px;
  padding: 0 2px;
  border: 1px solid #999;
  border-radius: 0;
  background: #fff;
  font-family: var(--arial);
  font-size: 14px;
}

.window input.required,
.window .required {
  border-color: #0000dc;
}

.window input.date {
  font-size: 13px;
}

.window input[type="checkbox"] {
  width: 15px;
  height: 15px;
  margin: 0;
  border: 1px solid #555;
  background: #fff;
  appearance: none;
}

.select {
  position: relative;
  display: block;
  width: 175px;
}

.select::after {
  content: "";
  position: absolute;
  top: 0;
  right: 0;
  width: 14px;
  height: 18px;
  border-left: 1px solid #999;
  background: #e0e0e6;
  pointer-events: none;
}

.select::before {
  content: "";
  position: absolute;
  top: 5px;
  right: 3px;
  z-index: 1;
  border: 4px solid transparent;
  border-top: 8px solid #000;
  border-bottom: 0;
  pointer-events: none;
}

.select.required::after {
  border-color: #0000dc;
}

.select select {
  display: block;
  width: 100%;
  height: 19px;
  padding: 0;
  border: 0;
  background: none;
  appearance: none;
  line-height: 19px;
}

/* Courtroom minutes */
.minutes {
  left: 486px;
  top: 185px;
  width: 825px;
  height: 701px;
  color: var(--off);
}

.minutes .window-body {
  display: flex;
  overflow: hidden;
}

.minutes-content {
  flex: 1;
  min-width: 0;
  padding-left: 12px;
}

.minutes-content h2 {
  margin-left: -2px;
  line-height: 21px;
  color: var(--off);
}

.minutes-head {
  display: flex;
  justify-content: space-between;
  margin-bottom: 10px;
  padding: 19px 106px 0 6px;
}

.minutes .case-type {
  padding-left: 2px;
}

.minutes .case-type,
.minutes .case-type span {
  color: var(--off);
}

.balance {
  padding-top: 5px;
  line-height: 14px;
}

.balance a {
  font-family: var(--arial);
  font-size: 12px;
  text-decoration: underline;
}

.bar {
  display: flex;
  align-items: center;
  height: 20px;
  margin-bottom: 5px;
  padding: 0 11px;
  background: var(--light-blue);
  font: bold 13px/20px var(--arial);
  color: var(--off);
  text-shadow: 1px 1px #fff;
  white-space: nowrap;
}

.bar.dark {
  padding-left: 9px;
  background: var(--blue);
  font-size: 14px;
}

.line-box {
  height: 6px;
  margin: 0 1px 10px 0;
  border: 1px solid var(--blue);
}

.bar.bar-result {
  display: grid;
  grid-template-columns: 74px 108px 295px 1fr auto;
  margin-bottom: 9px;
  padding: 0 7px 0 8px;
}

.bar-result a {
  grid-column: 5;
}

.bar.bar-plain {
  margin: 10px 0 6px;
  padding-left: 8px;
  font-size: 14px;
}

.minutes-form {
  display: flex;
  align-items: center;
  gap: 4px;
  height: 20px;
  margin-bottom: 4px;
}

.minutes-form label {
  width: 39px;
  padding-right: 2px;
  text-align: right;
  white-space: nowrap;
}

.minutes-form .select + label {
  width: 45px;
}

.minutes-form label.push {
  width: auto;
  margin-left: auto;
  padding-right: 6px;
}

.w-party {
  width: 135px;
}

.minutes-form:has(.w-party) {
  padding-right: 5px;
}

.minutes-form:has(.w-start) {
  padding-right: 2px;
}

.w-start {
  width: 60px;
}

.w-comment {
  flex: 1;
}

.w-comment + svg {
  margin-right: 4px;
}

.split {
  display: grid;
  grid-template-columns: 256px minmax(0, 1fr);
  column-gap: 20px;
}

.resources {
  column-gap: 0;
}

.judge {
  display: flex;
  justify-content: space-between;
  align-items: center;
  padding: 1px 0 0 5px;
}

.judge input {
  width: 153px;
}

.bar.bar-for {
  justify-content: flex-end;
  padding-right: 51px;
}

.bar.bar-end {
  justify-content: flex-end;
  gap: 60px;
  padding-right: 8px;
  font-size: 14px;
}

.warrants {
  height: 89px;
  margin: 0 1px 10px 0;
  padding: 10px 10px 0 379px;
  border: 1px solid var(--blue);
  font: 14px/17px var(--arial);
  overflow: hidden;
}

.warrants p {
  margin-bottom: 1px;
  overflow: hidden;
  white-space: nowrap;
}

.warrants b,
.warrants span {
  display: block;
}

.warrants .old {
  font-style: italic;
  text-decoration: line-through;
}

.bar-bond {
  justify-content: space-between;
}

.bonds .line-box {
  margin-bottom: 0;
}

.bar.bar-attorney {
  justify-content: flex-end;
  padding-right: 7px;
}

.bond-box {
  height: 54px;
  margin: 0 1px 10px 0;
  padding: 10px;
  border: 1px solid var(--blue);
  font: 14px/16px var(--arial);
}

.bond-box b,
.bond-box span {
  display: block;
}

.bar.bar-interim {
  padding-left: 6px;
}

.bar.bar-charge {
  justify-content: space-between;
  padding-left: 28px;
}

.bar.bar-order {
  display: grid;
  grid-template-columns: 343px 269px 1fr;
  padding: 0 0 0 14px;
}

.bar.bar-all {
  display: grid;
  grid-template-columns: 29px 58px 84px 1fr;
  padding-left: 20px;
}

.bar-order a,
.bar-all a {
  text-decoration: underline;
}

.cutoff {
  display: flex;
  align-items: flex-start;
  padding-left: 4px;
}

.minutes .cutoff input {
  margin: 3px 8px 0 0;
}

.cutoff label {
  width: 62px;
  margin-top: 4px;
}

.cutoff .btn {
  width: 80px;
  margin-top: -1px;
}

.minutes .btn {
  color: var(--off);
}

.scroller {
  flex: none;
  display: flex;
  flex-direction: column;
  justify-content: space-between;
  width: 29px;
  padding: 44px 0 18px 13px;
}

.scroller path {
  fill: none;
  stroke: #c4c4c4;
  stroke-width: 2.5;
}

.minutes .window-footer {
  padding: 0 5px 0 10px;
}

.btn.wide {
  width: 113px;
}

.btn-pair {
  flex: 1;
  display: flex;
  gap: 20px;
  padding-left: 207px;
}

.minutes .window-footer svg {
  margin-left: 25px;
}

/* Add event */
.add-event {
  left: 605px;
  top: 335px;
  width: 587px;
  height: 400px;
  color: #444;
}

.add-event h2 {
  padding-left: 10px;
}

.add-event .centered {
  padding-left: 20px;
}

.event-area {
  display: flex;
  justify-content: space-between;
  align-items: flex-start;
  padding: 18px 10px 0 0;
}

.event-form {
  display: grid;
  grid-template-columns: 102px 284px;
  gap: 2px 8px;
  line-height: 20px;
  justify-items: start;
}

.event-form > label,
.comment-label {
  justify-self: end;
  text-align: right;
}

.event-form input,
.event-form textarea,
.event-form select {
  color: #000;
}

.event-form .wide-select {
  width: 284px;
}

.comment-label {
  line-height: 16px;
}

.comment-label span {
  display: flex;
  gap: 6px;
  justify-content: flex-end;
}

.window textarea {
  display: block;
  width: 284px;
  height: 36px;
  resize: none;
}

.docket {
  grid-column: 2;
  display: flex;
  align-items: center;
  gap: 3px;
  height: 15px;
}

.docket input:checked::after {
  content: "";
  display: block;
  width: 4px;
  height: 7px;
  margin: 1px 0 0 4px;
  border: solid #000;
  border-width: 0 2px 2px 0;
  transform: rotate(40deg);
}

.event-form .does {
  grid-column: 2;
  margin-top: 4px;
}

.quick-links {
  display: flex;
  flex-direction: column;
  width: 140px;
  height: 115px;
  margin-top: -1px;
  padding: 5px 8px;
  border: 1px solid #777;
  font-size: 12px;
  line-height: 21px;
  color: #4a5f94;
}

.quick-links h3 {
  font: 16px/22px var(--arial);
  color: #000;
}

.quick-links a {
  display: flex;
  align-items: center;
  white-space: pre;
}

.quick-links a::before {
  content: "";
  margin: 0 9px 0 5px;
  border: 4px solid transparent;
  border-left-color: #e8702a;
  border-right: 0;
}

/* Calendar */
.calendar {
  left: 749px;
  top: 409px;
  width: 298px;
  height: 252px;
  border-color: #8b2fb0;
  box-shadow: 1px 2px 6px rgba(0, 0, 0, 0.45);
}

.calendar .window-body {
  padding: 0 9px 0 9px;
}

.calendar h2 {
  padding-left: 1px;
}

.month-row {
  display: flex;
  align-items: center;
  gap: 3px;
  margin: 5px 0;
}

.month-row strong {
  flex: 1;
  padding-left: 11px;
  font-size: 12px;
  color: #4a63a6;
}

.select.month {
  width: 90px;
}

.select.year {
  width: 55px;
}

.days {
  width: 100%;
  border-collapse: collapse;
  table-layout: fixed;
  border: 1px solid #000;
  border-right-width: 2px;
  border-bottom-width: 2px;
  font-size: 12px;
  line-height: 16px;
  color: #4a63a6;
}

.days th,
.days td {
  height: 19px;
  padding: 2px 1px 0;
  border: 1px solid #000;
}

.days th {
  color: #000;
}

.days td {
  text-align: right;
}

.days .out {
  color: #808080;
}

.days .today {
  background: #999;
  color: #fff;
}

/* Taskbar */
.taskbar {
  display: flex;
  height: 40px;
  background: #1b2a30;
  color: #fff;
}

.start {
  width: 48px;
  padding: 0;
  border: 0;
  background: none;
  line-height: 0;
}

.search {
  display: flex;
  align-items: center;
  gap: 11px;
  width: 288px;
  padding: 0 12px;
  border: 1px solid #bbb;
  background: #f2f2f2;
  color: #222;
}

.search input {
  flex: 1;
  min-width: 0;
  padding: 0;
  border: 0;
  background: none;
  font-size: 14px;
}

.search input::placeholder {
  color: #333;
}

.apps {
  display: flex;
  flex: 1;
  gap: 1px;
  padding-left: 3px;
}

.apps a {
  display: flex;
  align-items: center;
  justify-content: center;
  width: 48px;
  padding-bottom: 2px;
}

.apps .open {
  background: linear-gradient(#76b9ed, #76b9ed) center bottom / 40px 2px no-repeat;
}

.apps .current {
  background: linear-gradient(#76b9ed, #76b9ed) center bottom / 48px 2px no-repeat #4a5657;
}

.apps text {
  fill: #fff;
  font-family: var(--arial);
  font-weight: bold;
}

.tray {
  display: flex;
  align-items: center;
  gap: 9px;
}

.clock {
  display: flex;
  flex-direction: column;
  width: 54px;
  margin-right: 8px;
  font-size: 11px;
  line-height: 18px;
  text-align: center;
}

.notice {
  position: relative;
  width: 26px;
  height: 20px;
}

.notice span {
  position: absolute;
  left: 8px;
  top: 7px;
  width: 16px;
  height: 16px;
  border: 1px solid #999;
  border-radius: 50%;
  background: #333;
  font-size: 11px;
  font-weight: bold;
  line-height: 14px;
  text-align: center;
}

.show-desktop {
  width: 5px;
  height: 40px;
  border-left: 1px solid #7a8488;
}
```
